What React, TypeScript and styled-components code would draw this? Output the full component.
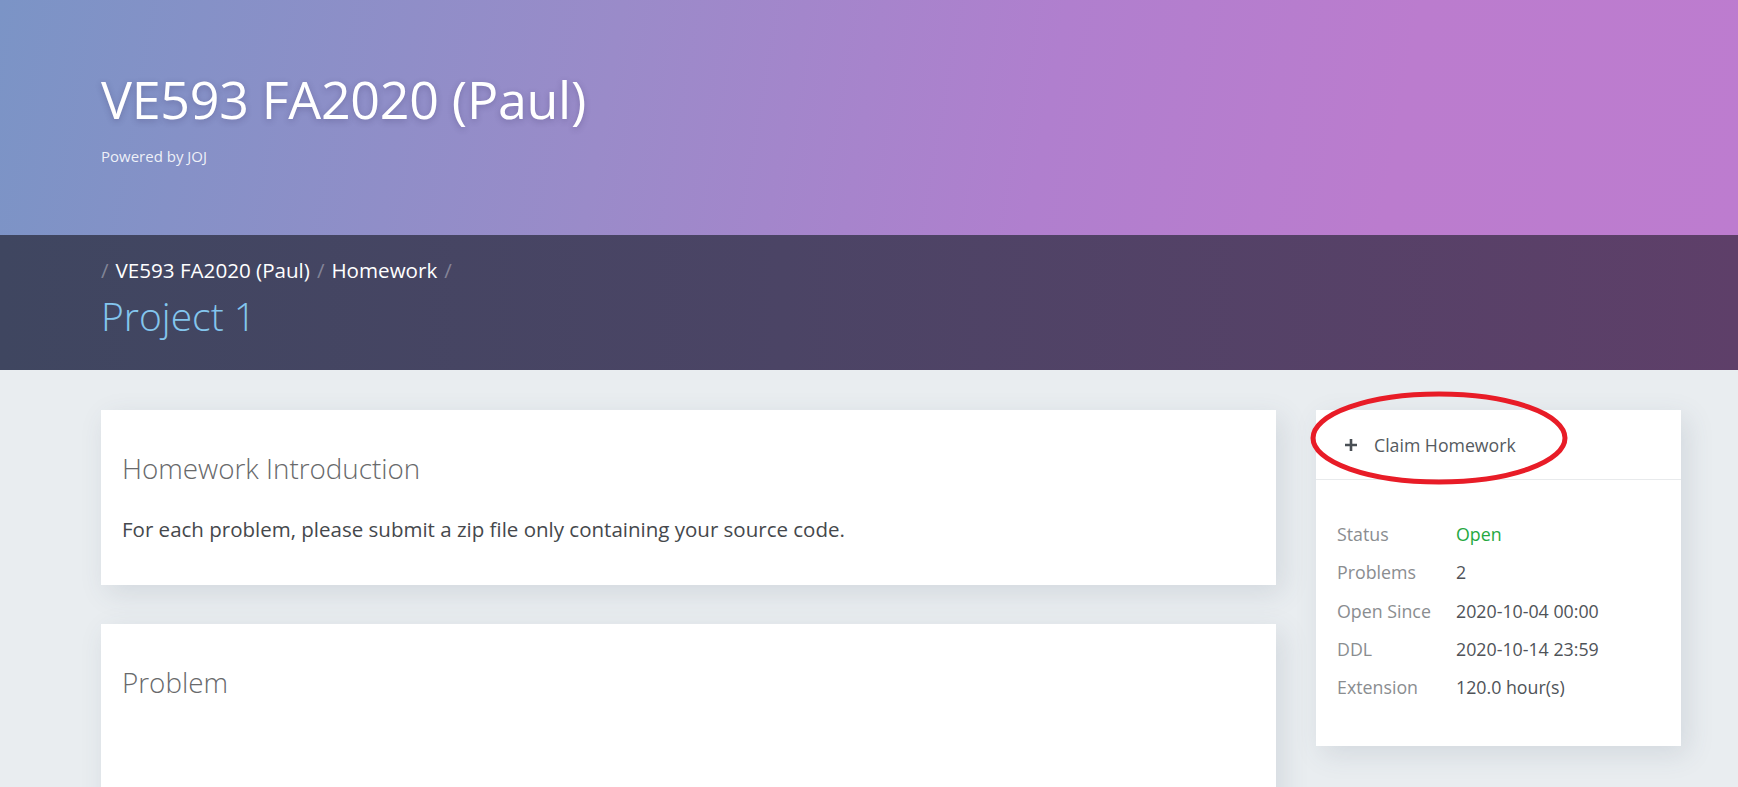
import React from "react";
import styled, { createGlobalStyle } from "styled-components";

const GlobalStyle = createGlobalStyle`
  html, body {
    margin: 0;
    padding: 0;
    background: #e9edf0;
    font-family: "Open Sans", "Noto Sans", "Liberation Sans", sans-serif;
    overflow: hidden;
  }
  * { box-sizing: border-box; }
`;

const Page = styled.div`
  width: 1738px;
  min-height: 787px;
  background: #e9edf0;
`;

const Hero = styled.header`
  height: 235px;
  padding: 68px 0 0 101px;
  background: linear-gradient(100deg, #7b94c6 0%, #9a8bc9 35%, #b07fce 60%, #bb7cce 80%, #bd7ccf 100%);
  color: #fff;
`;

const HeroTitle = styled.h1`
  margin: 0;
  font-size: 52px;
  line-height: 62px;
  font-weight: 400;
  letter-spacing: -0.3px;
  text-shadow: 0 2px 6px rgba(40, 30, 80, 0.25);
`;

const HeroSub = styled.div`
  margin-top: 16px;
  font-size: 15px;
  line-height: 20px;
  color: rgba(255, 255, 255, 0.88);
`;

const NavBar = styled.nav`
  height: 135px;
  padding: 20px 0 0 101px;
  background: linear-gradient(90deg, #3f4660 0%, #4b4465 45%, #5e3f69 100%);
`;

const Crumbs = styled.div`
  display: flex;
  align-items: baseline;
  gap: 7px;
  font-size: 20.6px;
  line-height: 30px;
`;

const Sep = styled.span`
  color: rgba(255, 255, 255, 0.35);
`;

const Crumb = styled.span`
  color: #ffffff;
`;

const PageTitle = styled.div`
  margin-top: 7px;
  font-size: 39px;
  line-height: 48px;
  font-weight: 300;
  color: #84c6ee;
`;

const Main = styled.main`
  display: flex;
  align-items: flex-start;
  gap: 40px;
  padding: 40px 57px 0 101px;
`;

const LeftCol = styled.div`
  flex: 1;
  display: flex;
  flex-direction: column;
  gap: 39px;
`;

const RightCol = styled.div`
  position: relative;
  width: 365px;
  flex-shrink: 0;
`;

const Card = styled.section<{ $tall?: boolean }>`
  background: #fff;
  box-shadow: 6px 8px 26px rgba(60, 80, 100, 0.13);
  padding: 41px 21px 42px;
  min-height: ${(p) => (p.$tall ? "200px" : "auto")};
`;

const CardTitle = styled.h2`
  margin: 0;
  font-size: 27.8px;
  line-height: 34px;
  font-weight: 300;
  color: #68696b;
`;

const CardText = styled.p`
  margin: 30px 0 0;
  font-size: 20.5px;
  line-height: 28px;
  color: #45484c;
`;

const SideCard = styled.aside`
  background: #fff;
  box-shadow: 6px 8px 26px rgba(60, 80, 100, 0.13);
`;

const ClaimRow = styled.div`
  height: 70px;
  display: flex;
  align-items: center;
  gap: 16px;
  padding-left: 28px;
  border-bottom: 1px solid #e8eaec;
  font-size: 17.7px;
  color: #555a60;
`;

const Plus = styled.svg`
  width: 14px;
  height: 14px;
  flex-shrink: 0;
`;

const InfoList = styled.div`
  display: grid;
  grid-template-columns: 119px 1fr;
  padding: 35px 21px 40px;
  font-size: 17.8px;
  line-height: 38.3px;
`;

const Label = styled.div`
  color: #8a8d90;
`;

const Value = styled.div<{ $ok?: boolean }>`
  color: ${(p) => (p.$ok ? "#25a83f" : "#4f5358")};
`;

const Annotation = styled.svg`
  position: absolute;
  left: -8px;
  top: -21px;
  width: 262px;
  height: 98px;
  pointer-events: none;
`;

const info: [string, string, boolean?][] = [
  ["Status", "Open", true],
  ["Problems", "2"],
  ["Open Since", "2020-10-04 00:00"],
  ["DDL", "2020-10-14 23:59"],
  ["Extension", "120.0 hour(s)"],
];

export default function App() {
  return (
    <Page>
      <GlobalStyle />
      <Hero>
        <HeroTitle>VE593 FA2020 (Paul)</HeroTitle>
        <HeroSub>Powered by JOJ</HeroSub>
      </Hero>
      <NavBar>
        <Crumbs>
          <Sep>/</Sep>
          <Crumb>VE593 FA2020 (Paul)</Crumb>
          <Sep>/</Sep>
          <Crumb>Homework</Crumb>
          <Sep>/</Sep>
        </Crumbs>
        <PageTitle>Project 1</PageTitle>
      </NavBar>
      <Main>
        <LeftCol>
          <Card>
            <CardTitle>Homework Introduction</CardTitle>
            <CardText>For each problem, please submit a zip file only containing your source code.</CardText>
          </Card>
          <Card $tall>
            <CardTitle>Problem</CardTitle>
          </Card>
        </LeftCol>
        <RightCol>
          <SideCard>
            <ClaimRow>
              <Plus viewBox="0 0 14 14">
                <path d="M7 1v12M1 7h12" stroke="#4a4f55" strokeWidth="2.6" />
              </Plus>
              <span>Claim Homework</span>
            </ClaimRow>
            <InfoList>
              {info.map(([k, v, ok]) => (
                <React.Fragment key={k}>
                  <Label>{k}</Label>
                  <Value $ok={ok}>{v}</Value>
                </React.Fragment>
              ))}
            </InfoList>
          </SideCard>
          <Annotation viewBox="0 0 262 98">
            <ellipse cx="131" cy="49" rx="126" ry="44" fill="none" stroke="#e81c27" strokeWidth="5" />
          </Annotation>
        </RightCol>
      </Main>
    </Page>
  );
}
